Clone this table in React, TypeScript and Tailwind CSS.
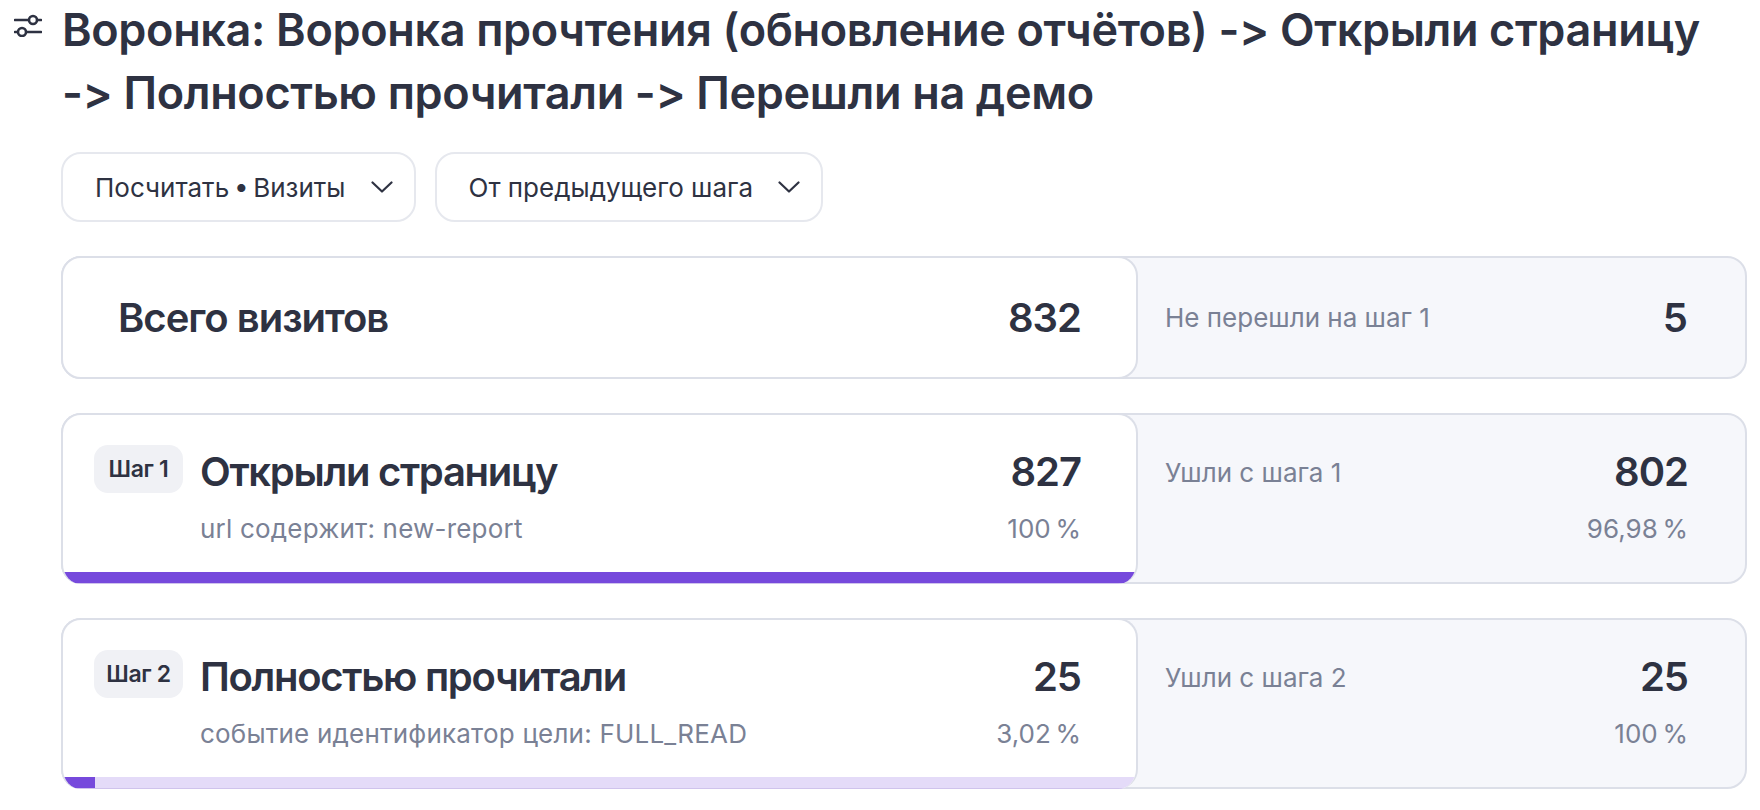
import React from 'react';

const Chevron = () => (
  <svg width="22" height="12" viewBox="0 0 22 12" fill="none" className="shrink-0">
    <polyline points="1.5,1.5 11,10.5 20.5,1.5" stroke="#2e3242" strokeWidth="2.2" strokeLinecap="round" strokeLinejoin="round" />
  </svg>
);

const FilterIcon = () => (
  <svg width="28" height="28" viewBox="0 0 28 28" fill="none" className="mt-[11px] mr-[20px] shrink-0">
    <g stroke="#2e3242" strokeWidth="2.6" strokeLinecap="round">
      <line x1="1" y1="11" x2="14.5" y2="11" />
      <circle cx="19" cy="11" r="4" />
      <line x1="23.5" y1="11" x2="27" y2="11" />
      <line x1="1" y1="23" x2="3.5" y2="23" />
      <circle cx="8" cy="23" r="4" />
      <line x1="12.5" y1="23" x2="27" y2="23" />
    </g>
  </svg>
);

const SelectButton = ({ label }: { label: string }) => (
  <button className="h-[70px] flex items-center gap-[25px] pl-[32px] pr-[21px] rounded-[20px] border-2 border-[#e6e8ee] bg-white text-[26px] text-[#2e3242]">
    <span>{label}</span>
    <Chevron />
  </button>
);

interface StepProps {
  step: number;
  title: string;
  condition: string;
  count: string;
  percent: string;
  barPercent: number;
  leftLabel: string;
  leftCount: string;
  leftPercent: string;
}

const StepRow = ({ step, title, condition, count, percent, barPercent, leftLabel, leftCount, leftPercent }: StepProps) => (
  <div className="flex h-[171px] rounded-[20px] border-2 border-[#dcdfe8] bg-[#f6f7fb]">
    <div className="-m-[2px] w-[1077px] shrink-0 flex flex-col rounded-[20px] border-2 border-b-0 border-[#dcdfe8] bg-white overflow-hidden">
      <div className="flex-1 flex pl-[31px] pr-[55px] pt-[30px]">
        <div className="h-[48px] w-[89px] shrink-0 rounded-[14px] bg-[#f0f1f5] flex items-center justify-center text-[23px] font-semibold tracking-[-0.3px] text-[#2e3242]">
          Шаг {step}
        </div>
        <div className="flex-1 ml-[17px] mt-[3px]">
          <div className="flex justify-between items-center h-[48px]">
            <span className="text-[40px] font-semibold tracking-[-1.3px] text-[#2e3242]">{title}</span>
            <span className="text-[40px] font-semibold tracking-[-1px] text-[#2e3242]">{count}</span>
          </div>
          <div className="flex justify-between items-center h-[30px] mt-[17px] text-[26px] text-[#7a8195]">
            <span className="tracking-[0.2px]">{condition}</span>
            <span>{percent}</span>
          </div>
        </div>
      </div>
      <div className="h-[12px] bg-[#e4dbf8] border-b border-[#cfc3ec]">
        <div className="h-full bg-[#7649dc]" style={{ width: `${barPercent}%` }} />
      </div>
    </div>
    <div className="flex-1 pl-[29px] pr-[57px] pt-[33px]">
      <div className="flex justify-between items-center h-[48px]">
        <span className="text-[26px] text-[#7a8195]">{leftLabel}</span>
        <span className="text-[40px] font-semibold tracking-[-1px] text-[#2e3242]">{leftCount}</span>
      </div>
      <div className="flex justify-end items-center h-[30px] mt-[17px] text-[26px] text-[#7a8195]">
        <span>{leftPercent}</span>
      </div>
    </div>
  </div>
);

export default function App() {
  return (
    <div className="min-h-screen bg-white text-[#2e3242] font-['Inter','Noto_Sans',sans-serif]">
      <header className="flex items-start pl-[14px] pr-[10px] -mt-[2px]">
        <FilterIcon />
        <h1 className="text-[45px] leading-[63px] font-semibold tracking-[-0.35px] whitespace-nowrap">
          Воронка: Воронка прочтения (обновление отчётов) -&gt; Открыли страницу
          <br />
          -&gt; Полностью прочитали -&gt; Перешли на демо
        </h1>
      </header>

      <main className="pl-[61px] pr-[13px]">
        <div className="mt-[28px] flex gap-[19px]">
          <SelectButton label={'Посчитать\u2009•\u2009Визиты'} />
          <SelectButton label="От предыдущего шага" />
        </div>

        <div className="mt-[34px] flex flex-col gap-[34px]">
          {/* Всего */}
          <div className="flex h-[123px] rounded-[20px] border-2 border-[#dcdfe8] bg-[#f6f7fb]">
            <div className="-m-[2px] w-[1077px] shrink-0 flex items-center justify-between pl-[55px] pr-[55px] rounded-[20px] border-2 border-[#dcdfe8] bg-white">
              <span className="text-[40px] font-semibold tracking-[-1px]">Всего визитов</span>
              <span className="text-[40px] font-semibold tracking-[-1px]">832</span>
            </div>
            <div className="flex-1 flex items-center justify-between pl-[29px] pr-[57px]">
              <span className="text-[26px] text-[#7a8195]">Не перешли на шаг 1</span>
              <span className="text-[40px] font-semibold">5</span>
            </div>
          </div>

          <StepRow
            step={1}
            title="Открыли страницу"
            condition="url содержит: new-report"
            count="827"
            percent={'100\u202F%'}
            barPercent={100}
            leftLabel="Ушли с шага 1"
            leftCount="802"
            leftPercent={'96,98\u202F%'}
          />

          <StepRow
            step={2}
            title="Полностью прочитали"
            condition="событие идентификатор цели: FULL_READ"
            count="25"
            percent={'3,02\u202F%'}
            barPercent={3.02}
            leftLabel="Ушли с шага 2"
            leftCount="25"
            leftPercent={'100\u202F%'}
          />
        </div>
      </main>
    </div>
  );
}
